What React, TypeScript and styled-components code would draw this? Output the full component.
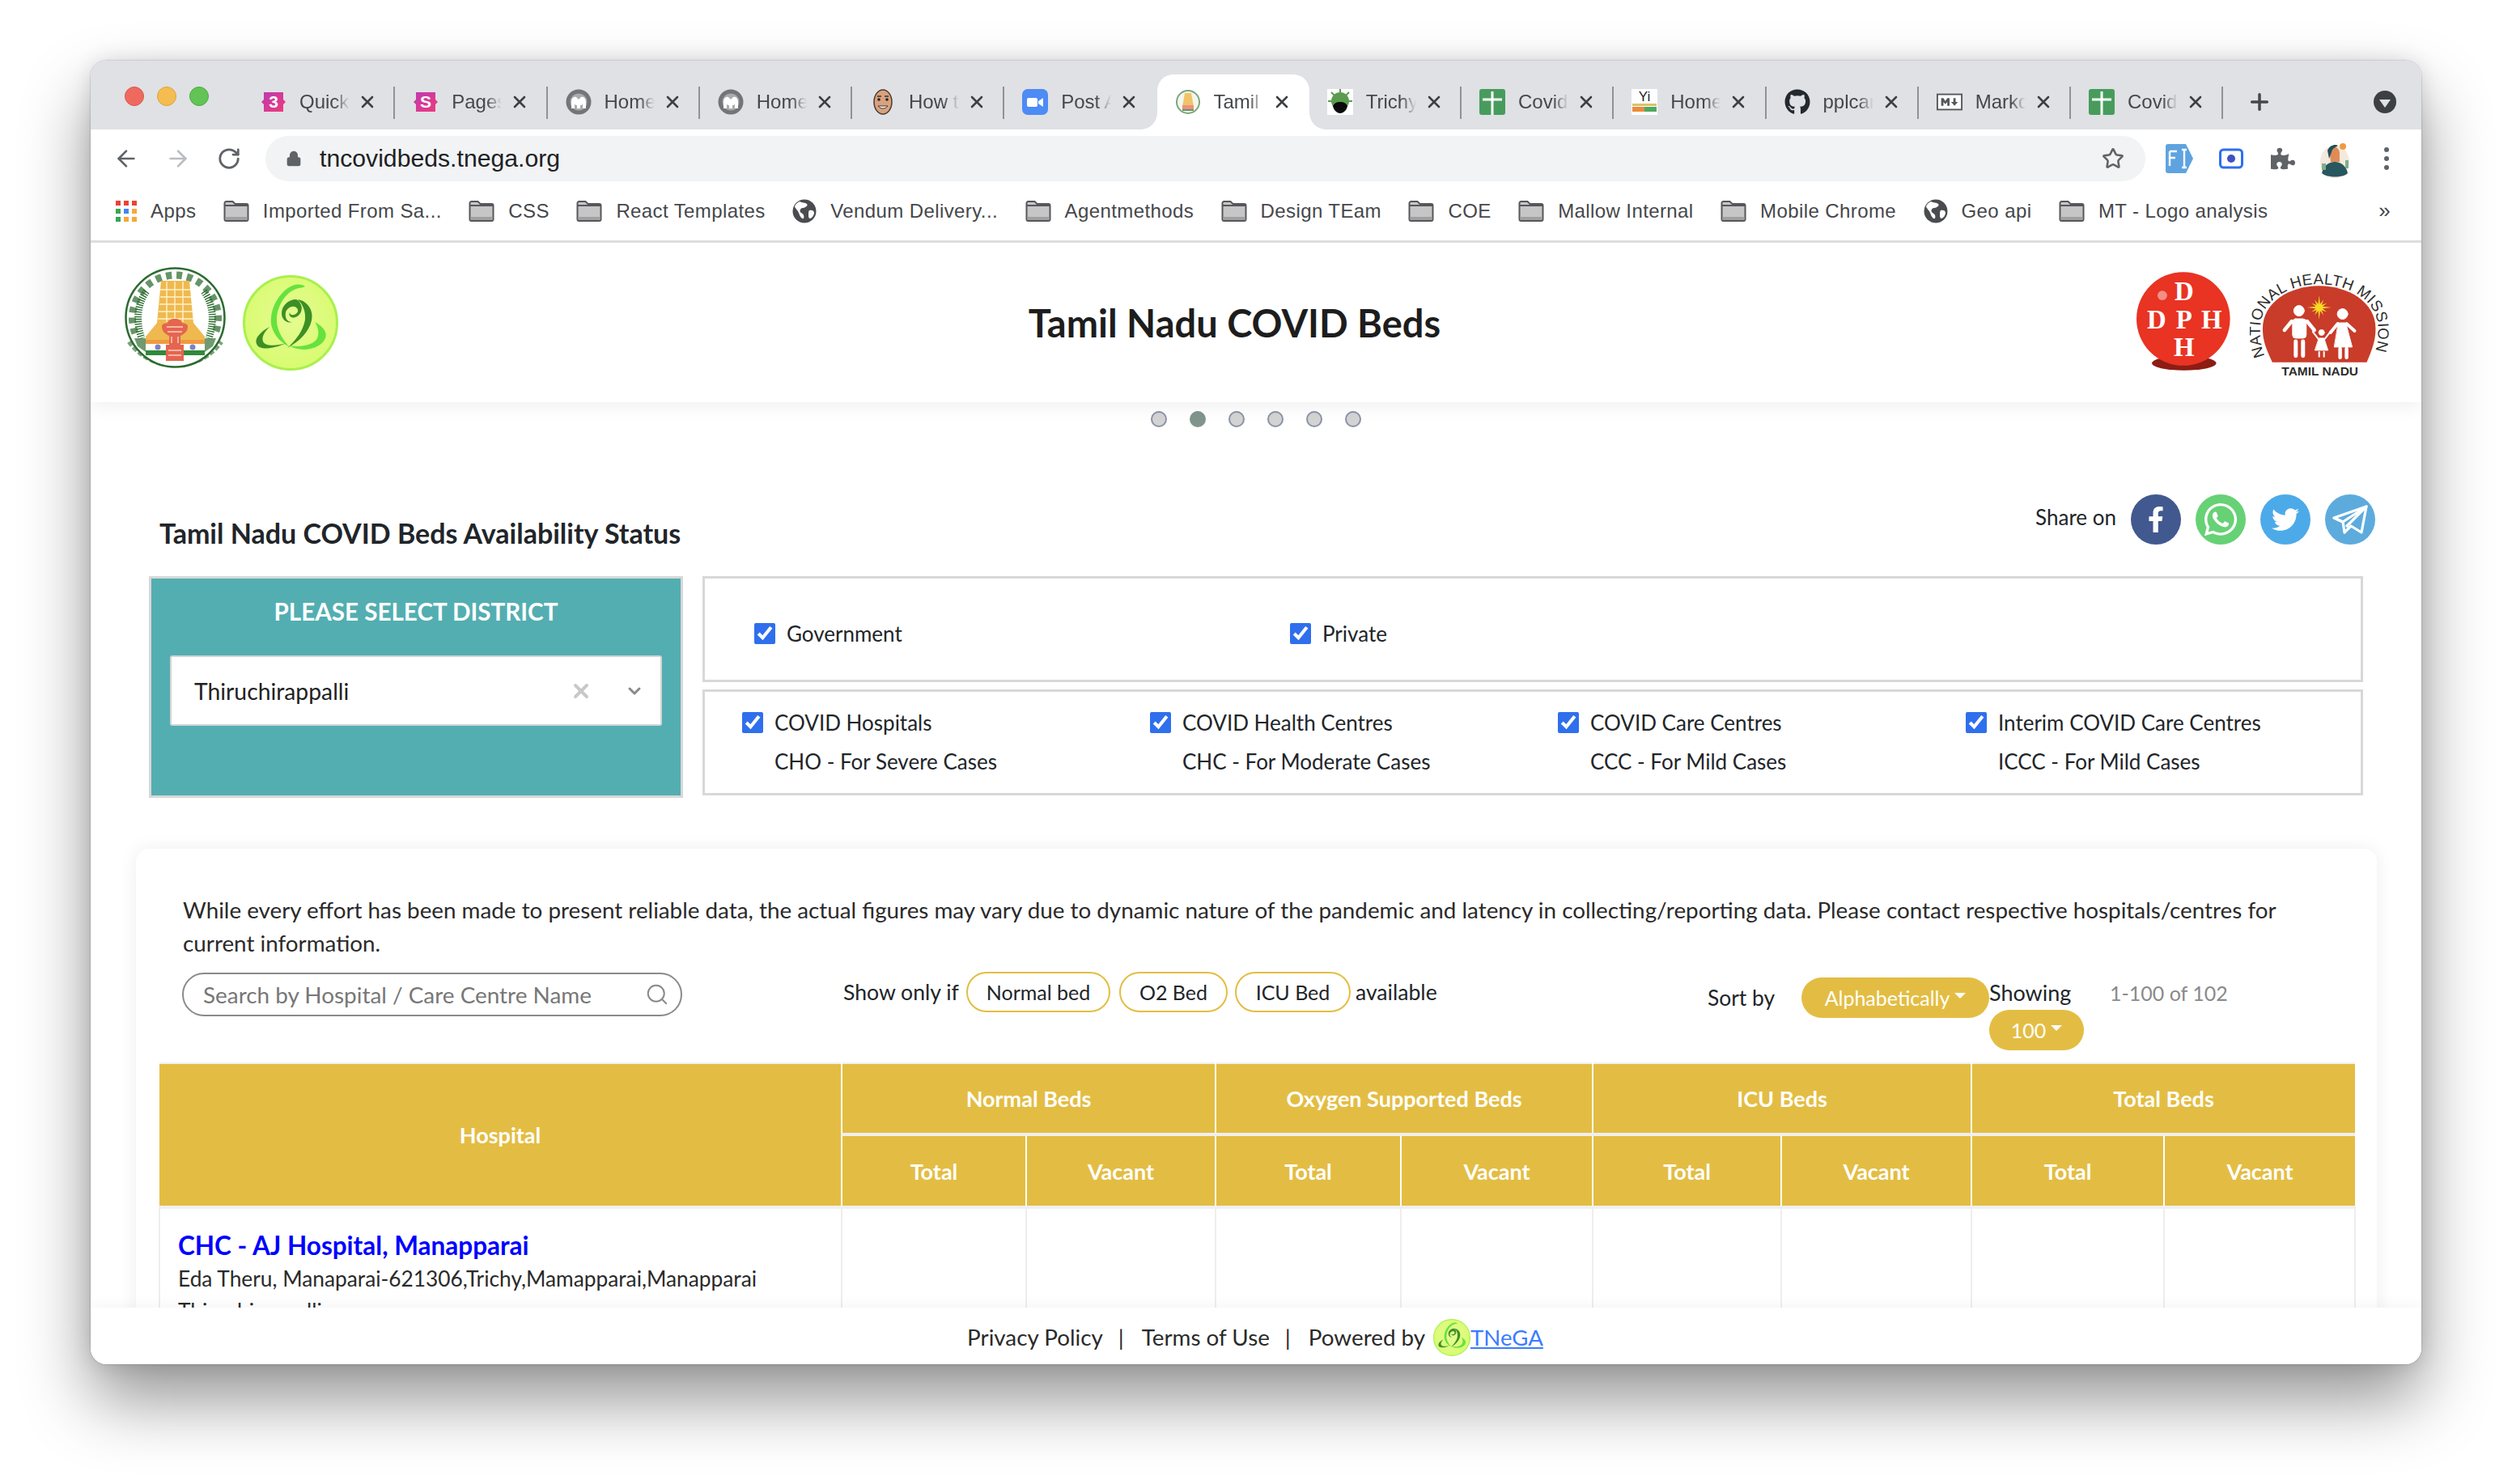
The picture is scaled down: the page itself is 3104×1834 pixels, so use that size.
import React from 'react';
import styled, { createGlobalStyle } from 'styled-components';
import { ArrowLeft, ArrowRight, RotateCw, Star, Plus, X, ChevronDown, Search, Lock } from 'lucide-react';
import { FaFacebookF, FaWhatsapp, FaTwitter, FaGithub, FaPuzzlePiece } from 'react-icons/fa';

const UI_FONT = '"Liberation Sans", Arial, sans-serif';
const PAGE_FONT = 'Lato, "Open Sans", sans-serif';
const GOLD = '#e3bd43';

const Global = createGlobalStyle`
  html, body {
    margin: 0;
    width: 3104px;
    height: 1834px;
    overflow: hidden;
    background: #fff;
  }
  * { box-sizing: border-box; }
`;

const Desktop = styled.div`
  width: 3104px;
  height: 1834px;
  padding: 75px 112px 148px;
`;

const Window = styled.div`
  height: 1611px;
  border-radius: 20px;
  background: #fff;
  display: flex;
  flex-direction: column;
  overflow: hidden;
  box-shadow: 0 0 2px rgba(0, 0, 0, 0.35);
`;

const WindowShadow = styled.div`
  border-radius: 20px;
  box-shadow: 0 44px 84px rgba(0, 0, 0, 0.42), 0 0 26px rgba(0, 0, 0, 0.12);
`;

/* ---------- browser chrome ---------- */

const TabStrip = styled.div`
  height: 85px;
  flex: none;
  background: #dfe1e5;
  display: flex;
  align-items: flex-end;
  font-family: ${UI_FONT};
`;

const Lights = styled.div`
  width: 188px;
  height: 68px;
  flex: none;
  padding: 15px 0 0 42px;
  display: flex;
  gap: 16px;
`;

const Light = styled.span<{ $color: string; $edge: string }>`
  width: 24px;
  height: 24px;
  border-radius: 50%;
  background: ${(p) => p.$color};
  border: 1px solid ${(p) => p.$edge};
`;

const TabItem = styled.div<{ $active?: boolean }>`
  position: relative;
  width: 188.25px;
  height: 68px;
  flex: none;
  padding: 0 0 0 22px;
  display: flex;
  align-items: center;
  background: ${(p) => (p.$active ? '#fff' : 'transparent')};
  border-radius: 20px 20px 0 0;
  &::before, &::after {
    content: '';
    display: ${(p) => (p.$active ? 'block' : 'none')};
    position: absolute;
    bottom: 0;
    width: 20px;
    height: 20px;
    background: radial-gradient(circle at 0 0, #dfe1e5 19.5px, #fff 20px);
  }
  &::before { left: -20px; }
  &::after { right: -20px; background: radial-gradient(circle at 100% 0, #dfe1e5 19.5px, #fff 20px); }
`;

const TabLine = styled.span<{ $hidden?: boolean }>`
  position: absolute;
  right: 0;
  top: 15px;
  width: 2px;
  height: 40px;
  background: ${(p) => (p.$hidden ? 'transparent' : '#8f9296')};
`;

const TabIcon = styled.span`
  width: 32px;
  height: 32px;
  flex: none;
  display: flex;
  align-items: center;
  justify-content: center;
`;

const TabLabel = styled.span`
  width: 62px;
  margin-left: 16px;
  overflow: hidden;
  white-space: nowrap;
  font-size: 24px;
  color: #45474b;
  -webkit-mask-image: linear-gradient(to right, #000 70%, transparent 100%);
  mask-image: linear-gradient(to right, #000 70%, transparent 100%);
`;

const TabClose = styled(X)`
  margin-left: 10px;
  flex: none;
`;

const NewTab = styled.div`
  width: 90px;
  height: 68px;
  display: flex;
  align-items: center;
  justify-content: center;
  color: #44464a;
`;

const ProfileDot = styled.div`
  margin: 0 0 20px 96px;
  width: 28px;
  height: 28px;
  border-radius: 50%;
  background: #3c4043;
  display: flex;
  align-items: center;
  justify-content: center;
  &::after {
    content: '';
    margin-top: 4px;
    border-left: 7px solid transparent;
    border-right: 7px solid transparent;
    border-top: 10px solid #dfe1e5;
  }
`;

const Toolbar = styled.div`
  height: 68px;
  flex: none;
  padding: 8px 0 4px 28px;
  display: flex;
  align-items: center;
  font-family: ${UI_FONT};
`;

const NavButton = styled.div<{ $dim?: boolean }>`
  width: 64px;
  height: 36px;
  display: flex;
  align-items: center;
  justify-content: flex-start;
  color: ${(p) => (p.$dim ? '#b9bcc0' : '#5f6368')};
`;

const Omnibox = styled.div`
  margin-left: -4px;
  width: 2323px;
  height: 56px;
  border-radius: 28px;
  background: #f1f3f4;
  display: flex;
  align-items: center;
  padding: 0 26px 0 25px;
  color: #202124;
  font-size: 30.2px;
`;

const Url = styled.span`
  margin-left: 22px;
  flex: 1;
`;

const ExtRow = styled.div`
  display: flex;
  align-items: center;
  margin-left: 10px;
  width: 320px;
`;

const ExtSlot = styled.div`
  width: 64px;
  display: flex;
  justify-content: center;
  align-items: center;
  color: #5f6368;
`;

const MenuDots = styled.div`
  display: flex;
  flex-direction: column;
  gap: 5px;
  span {
    width: 6px;
    height: 6px;
    border-radius: 50%;
    background: #5f6368;
  }
`;

const Bookmarks = styled.div`
  height: 72px;
  flex: none;
  padding: 0 0 4px 31px;
  display: flex;
  align-items: center;
  gap: 33.5px;
  border-bottom: 3px solid #dcdde1;
  font-family: ${UI_FONT};
  font-size: 24px;
  letter-spacing: 0.4px;
  color: #45474b;
`;

const Mark = styled.div`
  display: flex;
  align-items: center;
  gap: 17px;
  white-space: nowrap;
`;

const AppsGrid = styled.span`
  width: 26px;
  height: 26px;
  display: grid;
  grid-template-columns: repeat(3, 6px);
  grid-auto-rows: 6px;
  gap: 4px;
`;

const AppCell = styled.i<{ $c: string }>`
  background: ${(p) => p.$c};
`;

const More = styled.span`
  margin-left: auto;
  margin-right: 38px;
  font-size: 26px;
`;

/* ---------- page ---------- */

const Viewport = styled.div`
  flex: 1;
  min-height: 0;
  display: flex;
  flex-direction: column;
  font-family: ${PAGE_FONT};
  color: #212529;
`;

const Scroller = styled.div`
  flex: 1;
  min-height: 0;
  overflow: hidden;
`;

const SiteHeader = styled.header`
  height: 197px;
  padding: 0 37px 0 42px;
  background: #fff;
  display: flex;
  align-items: center;
  box-shadow: 0 4px 22px rgba(0, 0, 0, 0.07);
  position: relative;
`;

const LogoPair = styled.div<{ $gap: number }>`
  width: 264px;
  display: flex;
  align-items: center;
  gap: ${(p) => p.$gap}px;
`;

const RightLogos = styled(LogoPair)`
  width: 322px;
  padding-left: 7px;
`;

const SiteTitle = styled.h1`
  flex: 1;
  margin: 0;
  text-align: center;
  font-size: 47px;
  font-weight: 700;
  color: #1d1d1d;
`;

const Dots = styled.div`
  margin-top: 11px;
  display: flex;
  justify-content: center;
  gap: 28px;
`;

const Dot = styled.span<{ $active?: boolean }>`
  width: 20px;
  height: 20px;
  border-radius: 50%;
  background: ${(p) => (p.$active ? '#82958c' : '#d3d3d3')};
  border: 2.5px solid ${(p) => (p.$active ? '#82958c' : '#8c93a8')};
`;

const SectionHead = styled.div`
  margin-top: 83px;
  height: 101px;
  padding: 0 57px 0 85px;
  display: flex;
  justify-content: space-between;
`;

const SectionTitle = styled.h2`
  margin: 28px 0 0;
  font-size: 34px;
  line-height: 40px;
  font-weight: 700;
  color: #212529;
`;

const Share = styled.div`
  display: flex;
  align-items: flex-start;
  gap: 18px;
  font-size: 26px;
`;

const ShareLabel = styled.span`
  margin: 12px 0 0;
  line-height: 32px;
`;

const ShareIcon = styled.span<{ $c: string }>`
  width: 62px;
  height: 62px;
  border-radius: 50%;
  background: ${(p) => p.$c};
  color: #fff;
  display: flex;
  align-items: center;
  justify-content: center;
`;

const FilterRow = styled.div`
  padding-left: 72px;
  display: flex;
  gap: 24px;
  font-size: 26px;
`;

const DistrictPanel = styled.section`
  width: 660px;
  height: 274px;
  background: #53aeb1;
  border: 3px solid #d8d8d8;
  padding: 23px 23px 0;
`;

const DistrictTitle = styled.div`
  text-align: center;
  font-size: 29.6px;
  line-height: 36px;
  font-weight: 700;
  color: #fff;
`;

const DistrictSelect = styled.div`
  margin-top: 36px;
  height: 87px;
  background: #fff;
  border: 2px solid #d4d4d4;
  border-radius: 3px;
  display: flex;
  align-items: center;
  padding-left: 28px;
  font-size: 28.3px;
  color: #222;
`;

const DistrictValue = styled.span`
  flex: 1;
`;

const ClearIcon = styled(X)`
  color: #c8c8c8;
`;

const CaretIcon = styled(ChevronDown)`
  margin: 0 20px 0 40px;
  color: #8a8a8a;
`;

const FilterBoxes = styled.div`
  width: 2052px;
  display: flex;
  flex-direction: column;
  gap: 9px;
`;

const OutlineBox = styled.div`
  height: 131px;
  border: 3px solid #d8d8d8;
`;

const TypeRow = styled(OutlineBox)`
  padding: 10px 0 0 61px;
  display: flex;
  align-items: center;
`;

const TypeCheck = styled.label`
  width: 662px;
  display: flex;
  align-items: center;
  gap: 14px;
`;

const Box = styled.input.attrs({ type: 'checkbox', defaultChecked: true })`
  width: 26px;
  height: 26px;
  margin: 0;
  flex: none;
  accent-color: #2f6fed;
`;

const CentreGrid = styled(OutlineBox)`
  padding: 20px 0 0 46px;
  display: grid;
  grid-template-columns: repeat(4, 504px);
`;

const CentreCell = styled.label`
  display: grid;
  grid-template-columns: 26px 1fr;
  column-gap: 14px;
  row-gap: 12px;
  line-height: 36px;
  align-content: start;
  align-items: center;
`;

const CentreNote = styled.span`
  grid-column: 2;
`;

const Card = styled.section`
  margin: 63px 55px 0 56px;
  padding: 55px 28px 0;
  background: #fff;
  border-radius: 16px 16px 0 0;
  box-shadow: 0 0 22px rgba(0, 0, 0, 0.07);
`;

const Disclaimer = styled.p`
  margin: 0 0 16px;
  padding: 0 30px;
  font-size: 27.8px;
  line-height: 41px;
  color: #2a2a2a;
`;

const Controls = styled.div`
  height: 111px;
  margin-left: 29px;
  display: flex;
  align-items: flex-start;
  font-size: 25px;
`;

const SearchBox = styled.div`
  width: 618px;
  height: 54px;
  flex: none;
  border: 2.5px solid #8a8a8a;
  border-radius: 27px;
  padding: 0 14px 0 24px;
  display: flex;
  align-items: center;
  justify-content: space-between;
  font-size: 27.9px;
  color: #777;
`;

const ShowOnly = styled.div`
  margin-left: 199px;
  width: 736px;
  height: 48px;
  flex: none;
  display: flex;
  align-items: center;
  font-size: 26.6px;
`;

const ShowLabel = styled.span`
  width: 152px;
  flex: none;
`;

const Pill = styled.span<{ $w: number; $mr: number }>`
  width: ${(p) => p.$w}px;
  margin-right: ${(p) => p.$mr}px;
  height: 50px;
  flex: none;
  border: 2.5px solid ${GOLD};
  border-radius: 25px;
  display: flex;
  align-items: center;
  justify-content: center;
  font-size: 25px;
`;

const SortGroup = styled.div`
  margin: 6px 0 0 332px;
  width: 348px;
  flex: none;
  display: flex;
  align-items: center;
  font-size: 26.4px;
`;

const SortLabel = styled.span`
  width: 116px;
  flex: none;
`;

const GoldButton = styled.span<{ $w: number }>`
  width: ${(p) => p.$w}px;
  height: 50px;
  flex: none;
  border-radius: 25px;
  background: ${GOLD};
  color: #fff;
  display: flex;
  align-items: center;
  justify-content: center;
  gap: 6px;
  font-size: 25px;
  &::after {
    content: '';
    margin-top: -6px;
    border-left: 7px solid transparent;
    border-right: 7px solid transparent;
    border-top: 7px solid #fff;
  }
`;

const PageGroup = styled.div`
  width: 300px;
  flex: none;
  display: flex;
  flex-wrap: wrap;
  font-size: 27px;
`;

const ShowingLabel = styled.span`
  width: 149px;
  height: 46px;
  line-height: 50px;
`;

const RangeLabel = styled.span`
  height: 46px;
  line-height: 50px;
  color: #8a8a8a;
  font-size: 25px;
`;

const BedsTable = styled.table`
  width: 2713px;
  table-layout: fixed;
  border-collapse: collapse;
  border-top: 2px solid #f0f0f0;
`;

const HeadCell = styled.th<{ $sub?: boolean }>`
  height: ${(p) => (p.$sub ? 90 : 88)}px;
  padding: 0;
  background: ${GOLD};
  color: #fff;
  font-size: 27px;
  font-weight: 700;
  border: 2px solid #fff;
  border-top: none;
  border-bottom: 4px solid #f0f0f0;
  &:first-child { border-left: none; }
  &:last-child { border-right: none; }
`;

const BodyCell = styled.td`
  border: 2px solid #eeeeee;
  border-top: none;
  padding: 25px 22px 0;
  height: 160px;
  vertical-align: top;
`;

const HospitalName = styled.a`
  display: block;
  font-size: 31.5px;
  line-height: 41px;
  font-weight: 700;
  color: #0000ff;
`;

const HospitalLine = styled.div`
  font-size: 26.3px;
  line-height: 40px;
  color: #2a2a2a;
`;

const Footer = styled.footer`
  height: 70px;
  flex: none;
  background: #fff;
  display: flex;
  align-items: center;
  justify-content: center;
  padding: 3px 2px 0 0;
  font-size: 27.8px;
  color: #2a2a2a;
  box-shadow: 0 -6px 14px rgba(0, 0, 0, 0.03);
  position: relative;
`;

const FootLink = styled.span<{ $mr: number }>`
  margin-right: ${(p) => p.$mr}px;
`;

const TnegaLink = styled.a`
  color: #3b7cff;
  text-decoration: underline;
  font-size: 27.5px;
`;

/* ---------- drawings ---------- */

const Folder = () => (
  <svg width="32" height="28" viewBox="0 0 32 28">
    <path d="M1.500 4a2 2 0 0 1 2-2h8l3 3h14a2 2 0 0 1 2 2v17a2 2 0 0 1-2 2h-25a2 2 0 0 1-2-2z" fill="#c6c6c6" stroke="#56575b" strokeWidth="2" />
    <path d="M1.500 7h29" stroke="#56575b" strokeWidth="2" />
    <rect x="2.500" y="21" width="27" height="4" fill="#a0a0a0" />
  </svg>
);

const Globe = () => (
  <svg width="30" height="30" viewBox="0 0 30 30">
    <circle cx="15" cy="15" r="14.500" fill="#4b4c50" />
    <path d="M9 3c3 2 7 1 9 3s-2 5-5 5-5 4-2 6 4 3 3 7c-3 1-5-4-6-7S3 11 3 9c1-3 4-5 6-6zM21 14c3-1 6 0 6 3s-3 7-5 7-2-3-2-5 0-4 1-5z" fill="#fff" />
  </svg>
);

const PinkBadge = ({ ch }: { ch: string }) => (
  <svg width="30" height="30" viewBox="0 0 30 30">
    <defs>
      <linearGradient id={`pink${ch}`} x1="0" y1="0" x2="1" y2="1">
        <stop offset="0" stopColor="#bd3bb0" />
        <stop offset="1" stopColor="#ee3a7c" />
      </linearGradient>
    </defs>
    <path d="M3 3h24v9l3 3-3 3v9H3v-9l-3-3 3-3z" fill={`url(#pink${ch})`} />
    <text x="15" y="22" textAnchor="middle" fontSize="21" fontWeight="700" fontFamily="Liberation Sans" fill="#fff">{ch}</text>
  </svg>
);

const MoleIcon = () => (
  <svg width="32" height="32" viewBox="0 0 32 32">
    <circle cx="16" cy="16" r="15.500" fill="#737578" />
    <circle cx="16" cy="16" r="10.500" fill="#a9abad" />
    <path d="M7 24v-8c0-5 3-7 6-6l3 3 3-3c3-1 6 1 6 6v8h-4v-6l-1 2h-2v4h-4v-4h-2l-1-2v6z" fill="#fff" />
  </svg>
);

const FaceIcon = () => (
  <svg width="32" height="32" viewBox="0 0 32 32">
    <ellipse cx="16" cy="16" rx="11" ry="15" fill="#d9a27c" stroke="#4a3a30" strokeWidth="1.500" />
    <circle cx="11" cy="13" r="1.800" fill="#222" />
    <circle cx="21" cy="13" r="1.800" fill="#222" />
    <path d="M10 21c3 4 9 4 12 0z" fill="#fff" stroke="#333" />
    <path d="M9 9h5M18 9h5" stroke="#333" strokeWidth="1.400" />
  </svg>
);

const ZoomIcon = () => (
  <svg width="32" height="32" viewBox="0 0 32 32">
    <rect width="32" height="32" rx="7" fill="#4d8bf5" />
    <rect x="6" y="11" width="13" height="11" rx="2" fill="#fff" />
    <path d="M20 15l6-4v11l-6-4z" fill="#fff" />
  </svg>
);

const MiniEmblem = () => (
  <svg width="32" height="32" viewBox="0 0 32 32">
    <circle cx="16" cy="16" r="14" fill="#f4f6ee" stroke="#7ba77b" strokeWidth="2" />
    <path d="M12 5h8l3 17H9z" fill="#f0c466" />
    <rect x="9" y="20" width="14" height="6" fill="#ef8f80" />
    <path d="M9 26h14" stroke="#5d9c5d" strokeWidth="2" />
  </svg>
);

const VirusIcon = () => (
  <svg width="32" height="32" viewBox="0 0 32 32">
    <rect width="32" height="32" fill="#fff" />
    <circle cx="16" cy="15" r="11" fill="#5a9d4e" />
    <path d="M16 0v5M5 4l4 4M27 4l-4 4M1 15h4M31 15h-4" stroke="#5a9d4e" strokeWidth="2" />
    <path d="M7 21c2-4 5-5 9-5 4 0 7 1 9 5-1 6-6 9-9 9s-8-3-9-9z" fill="#0a0a0a" />
  </svg>
);

const SheetIcon = () => (
  <svg width="32" height="32" viewBox="0 0 32 32">
    <rect width="32" height="32" rx="3" fill="#479c5c" />
    <path d="M16 3v29M4 13h24" stroke="#fff" strokeWidth="3" />
  </svg>
);

const YiIcon = () => (
  <svg width="32" height="32" viewBox="0 0 32 32">
    <rect width="32" height="32" fill="#fff" />
    <text x="16" y="15" textAnchor="middle" fontSize="17" fontFamily="Liberation Sans" fill="#222">Yi</text>
    <rect x="1" y="18" width="30" height="3" fill="#d9c26a" />
    <rect x="1" y="22" width="15" height="6" fill="#ee8a3a" />
    <rect x="16" y="22" width="15" height="6" fill="#4fa860" />
  </svg>
);

const MarkdownIcon = () => (
  <svg width="34" height="22" viewBox="0 0 34 22">
    <rect x="1" y="1" width="32" height="20" fill="#fff" stroke="#55575a" strokeWidth="2" />
    <path d="M6 16V6h3l2.500 4L14 6h3v10h-3v-5l-2.500 3-2.500-3v5zM25 6v5h3l-4.500 5-4.500-5h3V6z" fill="#55575a" />
  </svg>
);

const FiIcon = () => (
  <svg width="34" height="36" viewBox="0 0 34 36">
    <path d="M3 0h22l9 18-9 18H3a3 3 0 0 1-3-3V3a3 3 0 0 1 3-3z" fill="#5ea3e0" />
    <path d="M5 9h9M5 9v18M5 17h7M20 7h6M20 29h6M23 7v22" stroke="#fff" strokeWidth="2.400" fill="none" />
  </svg>
);

const RecordIcon = () => (
  <svg width="30" height="30" viewBox="0 0 30 30">
    <rect x="1.500" y="4" width="27" height="22" rx="4" fill="#fff" stroke="#2d6ff0" strokeWidth="3" />
    <circle cx="15" cy="15" r="5" fill="#3f51c4" />
  </svg>
);

const AvatarIcon = () => (
  <svg width="40" height="48" viewBox="0 0 40 48">
    <ellipse cx="20" cy="28" rx="18" ry="20" fill="#f3e9dd" />
    <path d="M4 42c2-10 10-14 16-14s14 4 16 14c-5 6-26 6-32 0z" fill="#28575f" />
    <path d="M13 12c6-5 13-2 13 6v10H15z" fill="#e08b57" />
    <path d="M11 14c3-7 10-8 13-6-3 2-7 3-8 8l-3 8z" fill="#1f5059" />
    <circle cx="30" cy="9" r="4" fill="#f09a3e" />
    <path d="M4 30h5v8H4zM33 26h4v10h-4z" fill="#7fae8b" />
  </svg>
);

const TelegramGlyph = () => (
  <svg width="44" height="36" viewBox="0 0 44 36" fill="none" stroke="#fff" strokeWidth="3.200" strokeLinejoin="round">
    <path d="M2 16L42 2l-6 32-13-8-8 8-2-13z" />
    <path d="M2 16l11 5L42 2 17 27" />
  </svg>
);

const Emblem = () => (
  <svg width="125" height="137" viewBox="0 0 125 137">
    <path d="M6 92a70 70 0 0 0 113 0" fill="none" stroke="#5d8a60" strokeWidth="7" strokeDasharray="6 2.500" opacity="0.8" />
    <circle cx="62.500" cy="62.500" r="61" fill="#fff" stroke="#2b6b2e" strokeWidth="2.500" />
    {/* lettering round the ring */}
    <path d="M13 82A53 53 0 1 1 112 82" fill="none" stroke="#2b6b2e" strokeWidth="9" strokeDasharray="7 6" opacity="0.72" />
    <path d="M27 30C15 46 14 68 21 88" fill="none" stroke="#2f6f33" strokeWidth="9" strokeDasharray="1.500 1.500" />
    <path d="M98 30c12 16 13 38 6 58" fill="none" stroke="#2f6f33" strokeWidth="9" strokeDasharray="1.500 1.500" />
    <path d="M12 88h14v17l-10-7zM113 88H99v17l10-7z" fill="#3d7a3f" opacity="0.75" />
    <path d="M45 17h35l5 52 14 17v4H26v-4l14-17z" fill="#efb950" />
    <g stroke="#fff2c8" strokeWidth="1.400">
      <path d="M44 28h37M44 37h38M43 46h40M42 55h42M41 64h44M52 18v50M62 18v50M72 18v50" />
    </g>
    <rect x="26" y="90" width="73" height="5" fill="#ef9a3f" />
    <rect x="26" y="95" width="73" height="8" fill="#fff" />
    <rect x="26" y="103" width="73" height="6" fill="#2f8a38" />
    <circle cx="41" cy="99" r="3.500" fill="#7d82c0" />
    <circle cx="84" cy="99" r="3.500" fill="#7d82c0" />
    <path d="M46 74c0-5 5-4 7-5 1-3 4-5 9-5s8 2 9 5c2 1 7 0 7 5 0 6-5 9-9 11v11h4v20H51V96h4V85c-4-2-9-5-9-11z" fill="#e5654f" />
    <path d="M52 74h20M53 80h18M58 86v8M66 86v8M54 103h16M54 109h16" stroke="#f9d2c6" strokeWidth="1.400" />
  </svg>
);

const SwirlLogo = ({ size = 118 }: { size?: number }) => (
  <svg width={size} height={size} viewBox="0 0 118 118">
    <defs>
      <radialGradient id={`sw${size}`} cx="50%" cy="45%" r="55%">
        <stop offset="0" stopColor="#e6fb92" />
        <stop offset="1" stopColor="#d8fb70" />
      </radialGradient>
    </defs>
    <circle cx="59" cy="59" r="57.500" fill={`url(#sw${size})`} stroke="#a9f04f" strokeWidth="3" />
    <path d="M77 14C62 4 38 26 35 52c-2 16 9 30 22 36-9-10-16-22-15-36 2-18 14-34 28-36 4-1 6-1 7-2z" fill="#66e23e" />
    <path d="M68 30c12 2 20 14 17 26-3 14-15 26-30 34 11-10 20-22 22-35 1-10-3-19-9-25z" fill="#3d8f25" />
    <path d="M66 30c-10 0-18 8-18 17 0 8 6 13 13 11-7 0-9-6-8-12 2-6 9-9 13-6 4 3 2 8-3 9-3 1-5-1-5-3-2 4 2 8 7 6 7-2 10-11 6-17-1-3-3-4-5-5z" fill="#3d8f25" />
    <path d="M33 64c-11 6-19 14-16 21 3 8 19 7 37-1-14 4-26 4-29-2-2-6 2-12 8-18z" fill="#3d8f25" />
    <path d="M89 58c11 6 17 14 12 22-7 12-29 16-44 7 15 3 31-1 35-9 3-7 1-14-3-20z" fill="#66e23e" />
  </svg>
);

const DphLogo = () => (
  <svg width="116" height="126" viewBox="0 0 116 126" fontFamily="Liberation Serif, serif" fontWeight="700" fill="#fff" textAnchor="middle">
    <ellipse cx="59" cy="113" rx="40" ry="9" fill="#8c1c14" />
    <circle cx="58" cy="58" r="58" fill="#e93323" />
    <circle cx="32" cy="29" r="6" fill="#fff" opacity="0.45" />
    <text x="59" y="35" fontSize="33">D</text>
    <text x="25" y="70" fontSize="33">D</text>
    <text x="59" y="70" fontSize="33">P</text>
    <text x="93" y="70" fontSize="33">H</text>
    <text x="59" y="104" fontSize="33">H</text>
  </svg>
);

// eight rayed sun of the NHM mark
const SUN = Array.from({ length: 24 }, (_, i) => {
  const r = i % 2 === 0 ? (i % 6 === 0 ? 15 : 11) : 4.5;
  const a = (i * Math.PI) / 12;
  return `${(86 + r * Math.sin(a)).toFixed(1)},${(49 - r * Math.cos(a)).toFixed(1)}`;
}).join(' ');

const NhmLogo = () => (
  <svg width="176" height="136" viewBox="0 0 176 136">
    <defs>
      <path id="nhmArc" d="M19 110C12 92 13 84 13 74 13 40 50 20 86 20s73 20 73 54c0 10 1 18-6 36" />
    </defs>
    <text fontSize="19" fontFamily="Liberation Sans, sans-serif" fill="#2d2d2d" textLength="266" lengthAdjust="spacing">
      <textPath href="#nhmArc" startOffset="1">NATIONAL HEALTH MISSION</textPath>
    </text>
    <path d="M28 117C20 100 16 90 16 75c0-33 34-53 70-53s70 20 70 53c0 15-4 25-11 42z" fill="#c83c29" />
    <polygon points={SUN} fill="#f7d925" />
    <g fill="#fff" stroke="#fff" strokeLinecap="round">
      <circle cx="61" cy="53" r="6.500" />
      <rect x="53" y="63" width="17" height="24" rx="4" />
      <path d="M52 66L43 77M71 66l9 11" strokeWidth="4.500" fill="none" />
      <path d="M57 91v18M66 91v18" strokeWidth="5" />
      <circle cx="115" cy="57" r="6.500" />
      <path d="M110 68h9l8 30h-22z" />
      <path d="M109 69L100 80M120 69l10 9" strokeWidth="4" fill="none" />
      <path d="M112 100v11M120 100v11" strokeWidth="4.500" />
      <circle cx="89" cy="80" r="3.500" />
      <path d="M86 87h6l5 15H81z" />
      <path d="M85 88l-7-9M93 88l7-9" strokeWidth="2" fill="none" />
      <path d="M86 104v6M92 104v6" strokeWidth="2" />
    </g>
    <text x="87" y="133" textAnchor="middle" fontSize="15.500" fontWeight="700" fontFamily="Liberation Sans, sans-serif" fill="#2d2d2d">TAMIL NADU</text>
  </svg>
);

/* ---------- data ---------- */

const TABS: { label: string; icon: React.ReactNode; active?: boolean; noLine?: boolean }[] = [
  { label: 'Quick Start', icon: <PinkBadge ch="3" /> },
  { label: 'Pages', icon: <PinkBadge ch="S" /> },
  { label: 'Home page', icon: <MoleIcon /> },
  { label: 'Home page', icon: <MoleIcon /> },
  { label: 'How to add', icon: <FaceIcon /> },
  { label: 'Post Attend', icon: <ZoomIcon />, noLine: true },
  { label: 'Tamil Nadu', icon: <MiniEmblem />, active: true, noLine: true },
  { label: 'Trichy Covid', icon: <VirusIcon /> },
  { label: 'Covid', icon: <SheetIcon /> },
  { label: 'Home page', icon: <YiIcon /> },
  { label: 'pplcan', icon: <FaGithub size={32} color="#24292e" /> },
  { label: 'Markdown', icon: <MarkdownIcon /> },
  { label: 'Covid', icon: <SheetIcon /> },
];

const BOOKMARKS: { label: string; globe?: boolean }[] = [
  { label: 'Imported From Sa...' },
  { label: 'CSS' },
  { label: 'React Templates' },
  { label: 'Vendum Delivery...', globe: true },
  { label: 'Agentmethods' },
  { label: 'Design TEam' },
  { label: 'COE' },
  { label: 'Mallow Internal' },
  { label: 'Mobile Chrome' },
  { label: 'Geo api', globe: true },
  { label: 'MT - Logo analysis' },
];

const APP_COLORS = ['#ea4335', '#ea4335', '#ea4335', '#34a853', '#4285f4', '#f4a93a', '#34a853', '#f4a93a', '#f4a93a'];

const CENTRES = [
  ['COVID Hospitals', 'CHO - For Severe Cases'],
  ['COVID Health Centres', 'CHC - For Moderate Cases'],
  ['COVID Care Centres', 'CCC - For Mild Cases'],
  ['Interim COVID Care Centres', 'ICCC - For Mild Cases'],
];

const COLS = [843, 228, 234, 229, 237, 233, 235, 238, 236];
const GROUPS = ['Normal Beds', 'Oxygen Supported Beds', 'ICU Beds', 'Total Beds'];

export default function App() {
  return (
    <>
      <Global />
      <Desktop>
        <WindowShadow>
          <Window>
            <TabStrip>
              <Lights>
                <Light $color="#ee6a5f" $edge="#d9564c" />
                <Light $color="#f5bd4f" $edge="#d9a23e" />
                <Light $color="#61c454" $edge="#52a845" />
              </Lights>
              {TABS.map((t, i) => (
                <TabItem key={i} $active={t.active}>
                  <TabIcon>{t.icon}</TabIcon>
                  <TabLabel>{t.label}</TabLabel>
                  <TabClose size={24} strokeWidth={2.6} color="#3c4043" />
                  <TabLine $hidden={t.noLine} />
                </TabItem>
              ))}
              <NewTab>
                <Plus size={32} strokeWidth={2.6} />
              </NewTab>
              <ProfileDot />
            </TabStrip>

            <Toolbar>
              <NavButton><ArrowLeft size={32} strokeWidth={2} /></NavButton>
              <NavButton $dim><ArrowRight size={32} strokeWidth={2} /></NavButton>
              <NavButton><RotateCw size={30} strokeWidth={2.2} /></NavButton>
              <Omnibox>
                <Lock size={20} fill="#5f6368" color="#5f6368" />
                <Url>tncovidbeds.tnega.org</Url>
                <Star size={28} color="#5f6368" strokeWidth={2.2} />
              </Omnibox>
              <ExtRow>
                <ExtSlot><FiIcon /></ExtSlot>
                <ExtSlot><RecordIcon /></ExtSlot>
                <ExtSlot><FaPuzzlePiece size={30} /></ExtSlot>
                <ExtSlot><AvatarIcon /></ExtSlot>
                <ExtSlot><MenuDots><span /><span /><span /></MenuDots></ExtSlot>
              </ExtRow>
            </Toolbar>

            <Bookmarks>
              <Mark>
                <AppsGrid>{APP_COLORS.map((c, i) => <AppCell key={i} $c={c} />)}</AppsGrid>
                Apps
              </Mark>
              {BOOKMARKS.map((b) => (
                <Mark key={b.label}>
                  {b.globe ? <Globe /> : <Folder />}
                  {b.label}
                </Mark>
              ))}
              <More>»</More>
            </Bookmarks>

            <Viewport>
              <Scroller>
                <SiteHeader>
                  <LogoPair $gap={21}>
                    <Emblem />
                    <SwirlLogo />
                  </LogoPair>
                  <SiteTitle>Tamil Nadu COVID Beds</SiteTitle>
                  <RightLogos $gap={24}>
                    <DphLogo />
                    <NhmLogo />
                  </RightLogos>
                </SiteHeader>

                <Dots>
                  {[0, 1, 2, 3, 4, 5].map((i) => <Dot key={i} $active={i === 1} />)}
                </Dots>

                <SectionHead>
                  <SectionTitle>Tamil Nadu COVID Beds Availability Status</SectionTitle>
                  <Share>
                    <ShareLabel>Share on</ShareLabel>
                    <ShareIcon $c="#41598f"><FaFacebookF size={32} /></ShareIcon>
                    <ShareIcon $c="#67d175"><FaWhatsapp size={46} /></ShareIcon>
                    <ShareIcon $c="#4daae9"><FaTwitter size={34} /></ShareIcon>
                    <ShareIcon $c="#5dabdd"><TelegramGlyph /></ShareIcon>
                  </Share>
                </SectionHead>

                <FilterRow>
                  <DistrictPanel>
                    <DistrictTitle>PLEASE SELECT DISTRICT</DistrictTitle>
                    <DistrictSelect>
                      <DistrictValue>Thiruchirappalli</DistrictValue>
                      <ClearIcon size={28} strokeWidth={3.4} />
                      <CaretIcon size={24} strokeWidth={3} />
                    </DistrictSelect>
                  </DistrictPanel>
                  <FilterBoxes>
                    <TypeRow>
                      <TypeCheck><Box />Government</TypeCheck>
                      <TypeCheck><Box />Private</TypeCheck>
                    </TypeRow>
                    <CentreGrid>
                      {CENTRES.map(([name, note]) => (
                        <CentreCell key={name}>
                          <Box />
                          <span>{name}</span>
                          <CentreNote>{note}</CentreNote>
                        </CentreCell>
                      ))}
                    </CentreGrid>
                  </FilterBoxes>
                </FilterRow>

                <Card>
                  <Disclaimer>
                    While every effort has been made to present reliable data, the actual figures may vary due to dynamic nature of the pandemic and latency in collecting/reporting data. Please contact respective hospitals/centres for current information.
                  </Disclaimer>
                  <Controls>
                    <SearchBox>
                      Search by Hospital / Care Centre Name
                      <Search size={30} strokeWidth={1.6} color="#8a8a8a" />
                    </SearchBox>
                    <ShowOnly>
                      <ShowLabel>Show only if</ShowLabel>
                      <Pill $w={178} $mr={11}>Normal bed</Pill>
                      <Pill $w={134} $mr={9}>O2 Bed</Pill>
                      <Pill $w={143} $mr={6}>ICU Bed</Pill>
                      available
                    </ShowOnly>
                    <SortGroup>
                      <SortLabel>Sort by</SortLabel>
                      <GoldButton $w={232}>Alphabetically</GoldButton>
                    </SortGroup>
                    <PageGroup>
                      <ShowingLabel>Showing</ShowingLabel>
                      <RangeLabel>1-100 of 102</RangeLabel>
                      <GoldButton $w={117}>100</GoldButton>
                    </PageGroup>
                  </Controls>
                  <BedsTable>
                    <colgroup>
                      {COLS.map((w, i) => <col key={i} width={w} />)}
                    </colgroup>
                    <thead>
                      <tr>
                        <HeadCell rowSpan={2}>Hospital</HeadCell>
                        {GROUPS.map((g) => <HeadCell key={g} colSpan={2}>{g}</HeadCell>)}
                      </tr>
                      <tr>
                        {GROUPS.flatMap((g) => [
                          <HeadCell key={g + 't'} $sub>Total</HeadCell>,
                          <HeadCell key={g + 'v'} $sub>Vacant</HeadCell>,
                        ])}
                      </tr>
                    </thead>
                    <tbody>
                      <tr>
                        <BodyCell>
                          <HospitalName>CHC - AJ Hospital, Manapparai</HospitalName>
                          <HospitalLine>Eda Theru, Manaparai-621306,Trichy,Mamapparai,Manapparai</HospitalLine>
                          <HospitalLine>Thiruchirappalli</HospitalLine>
                        </BodyCell>
                        {COLS.slice(1).map((_, i) => <BodyCell key={i} />)}
                      </tr>
                    </tbody>
                  </BedsTable>
                </Card>
              </Scroller>

              <Footer>
                <FootLink $mr={19}>Privacy Policy</FootLink>
                <FootLink $mr={22}>|</FootLink>
                <FootLink $mr={19}>Terms of Use</FootLink>
                <FootLink $mr={22}>|</FootLink>
                <FootLink $mr={10}>Powered by</FootLink>
                <SwirlLogo size={46} />
                <TnegaLink>TNeGA</TnegaLink>
              </Footer>
            </Viewport>
          </Window>
        </WindowShadow>
      </Desktop>
    </>
  );
}
